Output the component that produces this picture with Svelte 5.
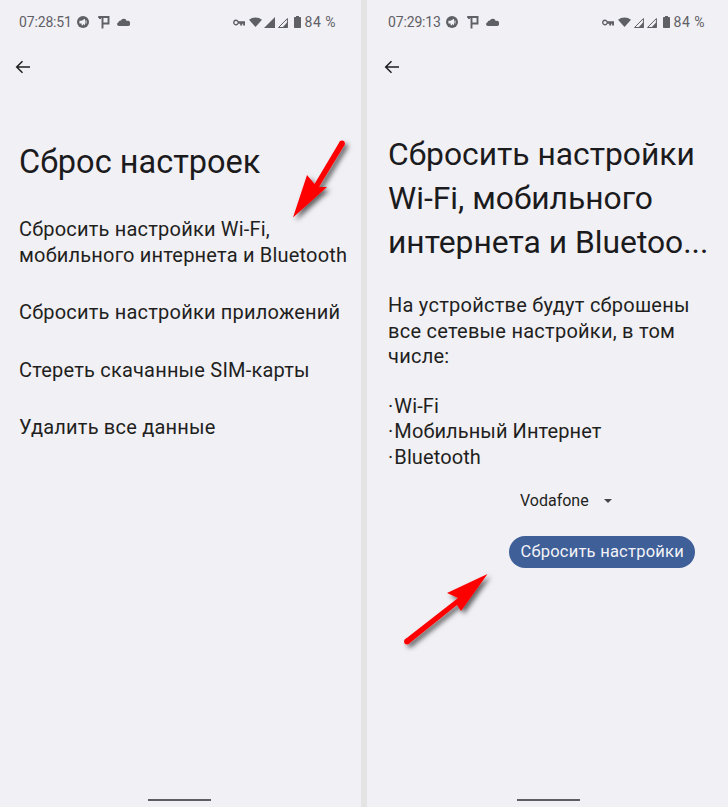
<script>
  const signals = [
    { time: '07:28:51', bars: [true, false] },
    { time: '07:29:13', bars: [false, false] }
  ];
</script>

{#snippet status(s)}
  <div class="status">
    <span class="time">{s.time}</span>
    <svg class="ic-vpn" viewBox="0 0 12 12" width="12" height="12"><circle cx="6" cy="6" r="6" fill="#5f6065"/><path d="M2.400 4.800h2.200L8 2.800v6.400L6 8v1.300H4.600V7.400H2.400z" fill="#f1f0f5"/><path d="M9 4.500v3" stroke="#f1f0f5"/></svg>
    <svg class="ic-p" viewBox="0 0 12 13" width="12" height="13"><path d="M0.200 1h11.300M2 1v2M10.500 1v6.500H4.500M4.500 1v11.500" fill="none" stroke="#5f6065" stroke-width="1.900"/></svg>
    <svg class="ic-cloud" viewBox="0 0 13 8" width="13" height="8"><path d="M1.800 8a1.800 1.800 0 0 1-.5-3.500A2.500 2.500 0 0 1 3.800 2.600 3.300 3.300 0 0 1 9.800 3 2.600 2.600 0 0 1 11.500 8z" fill="#5f6065"/></svg>
    <span class="spacer"></span>
    <svg class="ic-key" viewBox="0 0 12 7" width="12" height="7"><path d="M3 .6a2.900 2.900 0 1 0 2.600 4.100h1.600v1.700h2V4.700h.9v1.700H12V2.300H5.600A2.900 2.900 0 0 0 3 .6zM3 1.900a1.600 1.600 0 1 1 0 3.200 1.600 1.600 0 0 1 0-3.200z" fill="#5f6065" fill-rule="evenodd"/></svg>
    <svg class="ic-wifi" viewBox="0 0 13 10" width="13" height="10"><path d="M0 2.800A10 10 0 0 1 13 2.800L6.500 10z" fill="#5f6065"/></svg>
    {#each s.bars as filled}
      <svg class="ic-sig" viewBox="0 0 11 11" width="11" height="11">
        {#if filled}
          <path d="M11 0v11H0z" fill="#5f6065"/>
        {:else}
          <path d="M10.400 1.500v9H1.500z" fill="none" stroke="#5f6065" stroke-width="1"/><path d="M10.500 5v6H5z" fill="#5f6065"/>
        {/if}
      </svg>
    {/each}
    <svg class="ic-bat" viewBox="0 0 7 12" width="7" height="12"><path d="M2 0h3v1h1.300c.4 0 .7.300.7.700v9.600c0 .4-.3.700-.7.700H.7c-.4 0-.7-.3-.7-.7V1.700C0 1.300.3 1 .7 1H2z" fill="#5f6065"/></svg>
    <span class="pct">84 %</span>
  </div>
  <svg class="back" viewBox="0 0 16 14" width="16" height="14"><path d="M15 7H2M7.500 1.200 1.700 7l5.800 5.800" fill="none" stroke="#1f1f21" stroke-width="1.500"/></svg>
{/snippet}

<div class="screen">
  <section class="panel left">
    {@render status(signals[0])}
    <h1 class="title-left">Сброс настроек</h1>
    <ul class="menu">
      <li>Сбросить настройки Wi-Fi,<br />мобильного интернета и Bluetooth</li>
      <li>Сбросить настройки приложений</li>
      <li>Стереть скачанные SIM-карты</li>
      <li>Удалить все данные</li>
    </ul>
    <div class="handle"></div>
  </section>

  <section class="panel right">
    {@render status(signals[1])}
    <h1 class="title-right">Сбросить настройки<br />Wi-Fi, мобильного<br />интернета и Bluetoo...</h1>
    <p class="desc">На устройстве будут сброшены<br />все сетевые настройки, в том<br />числе:</p>
    <ul class="bullets">
      <li>Wi-Fi</li>
      <li>Мобильный Интернет</li>
      <li>Bluetooth</li>
    </ul>
    <div class="sim"><span>Vodafone</span><i class="caret"></i></div>
    <div class="action"><button>Сбросить настройки</button></div>
    <div class="handle"></div>
  </section>

  <svg class="arrow" viewBox="0 0 728 807" width="728" height="807">
    <defs>
      <filter id="sh" x="-30%" y="-30%" width="160%" height="160%">
        <feDropShadow dx="3" dy="3" stdDeviation="2.500" flood-color="#000" flood-opacity="0.6"/>
      </filter>
    </defs>
    <g filter="url(#sh)" fill="#fe0000">
      <path d="M293 217.500 307 175 314.500 184 339.500 142 344.500 145 319 187 327 187z"/>
      <circle cx="342" cy="143.500" r="2.900"/>
    </g>
    <g filter="url(#sh)" fill="#fe0000">
      <path d="M487.500 574 447 593 458 598 405.500 639 408.500 644 457 605 461 611z"/>
      <circle cx="407" cy="641.500" r="2.900"/>
    </g>
  </svg>
</div>

<style>
  :global(body) { margin: 0; background: #f1f0f5; }
  .screen {
    position: relative;
    display: flex;
    justify-content: space-between;
    width: 728px;
    height: 807px;
    background: #e4e4e5;
    overflow: hidden;
    font-family: Roboto, "Noto Sans", sans-serif;
    color: #1f1f21;
  }
  .panel {
    position: relative;
    width: 361px;
    height: 807px;
    background: #f1f0f5;
    box-sizing: border-box;
    padding: 0 0 0 19px;
  }
  .right { padding-left: 21px; }
  .status {
    display: flex;
    align-items: center;
    height: 14px;
    margin: 15px 0 0;
    width: 317px;
    font-size: 14px;
    color: #5f6065;
  }
  .spacer { flex: 1; }
  .time { margin-right: 5px; letter-spacing: -0.15px; }
  .pct { letter-spacing: 0.5px; }
  .ic-p { margin-left: 9px; }
  .ic-cloud { margin-left: 7px; }
  .ic-key { margin-right: 4px; }
  .ic-wifi { margin-right: 2px; }
  .ic-sig { margin-right: 2px; }
  .ic-sig + .ic-sig { margin-right: 6px; }
  .ic-bat { margin-right: 4px; }
  .back { display: block; margin: 31px 0 0 -4px; }
  h1 { font-weight: 400; margin: 0; color: #1b1b1d; }
  .title-left { font-size: 32.500px; line-height: 40px; margin-top: 68px; }
  .menu, .bullets { list-style: none; margin: 0; padding: 0; }
  .menu { margin-top: 33.500px; font-size: 20px; line-height: 26px; letter-spacing: 0.2px; }
  .menu li + li { margin-top: 31.500px; }
  .title-right { font-size: 31.800px; line-height: 44px; margin-top: 58px; }
  .desc { font-size: 20px; line-height: 25.500px; margin: 29px 0 0; letter-spacing: 0.25px; }
  .bullets { margin-top: 24px; font-size: 20px; line-height: 25.500px; letter-spacing: 0.1px; }
  .bullets li::before { content: "·"; margin-right: 1px; }
  .sim { display: flex; align-items: center; margin: 20px 0 0 132px; font-size: 16px; line-height: 22px; }
  .caret { width: 0; height: 0; margin-left: 15px; border: 4.500px solid transparent; border-top: 4.500px solid #45454a; border-bottom: 0; }
  .action { display: flex; justify-content: flex-end; margin: 23.500px 33px 0 0; }
  button {
    height: 32px;
    padding: 0 11px;
    border: 0;
    border-radius: 16px;
    background: #3f5f99;
    color: #f3f3f7;
    font: 400 16.500px Roboto, sans-serif;
    letter-spacing: 0.24px;
  }
  .handle {
    position: absolute;
    left: 148px;
    bottom: 6px;
    width: 63px;
    height: 2px;
    background: #5e5e62;
  }
  .right .handle { left: 150px; }
  .arrow { position: absolute; left: 0; top: 0; pointer-events: none; }
</style>
